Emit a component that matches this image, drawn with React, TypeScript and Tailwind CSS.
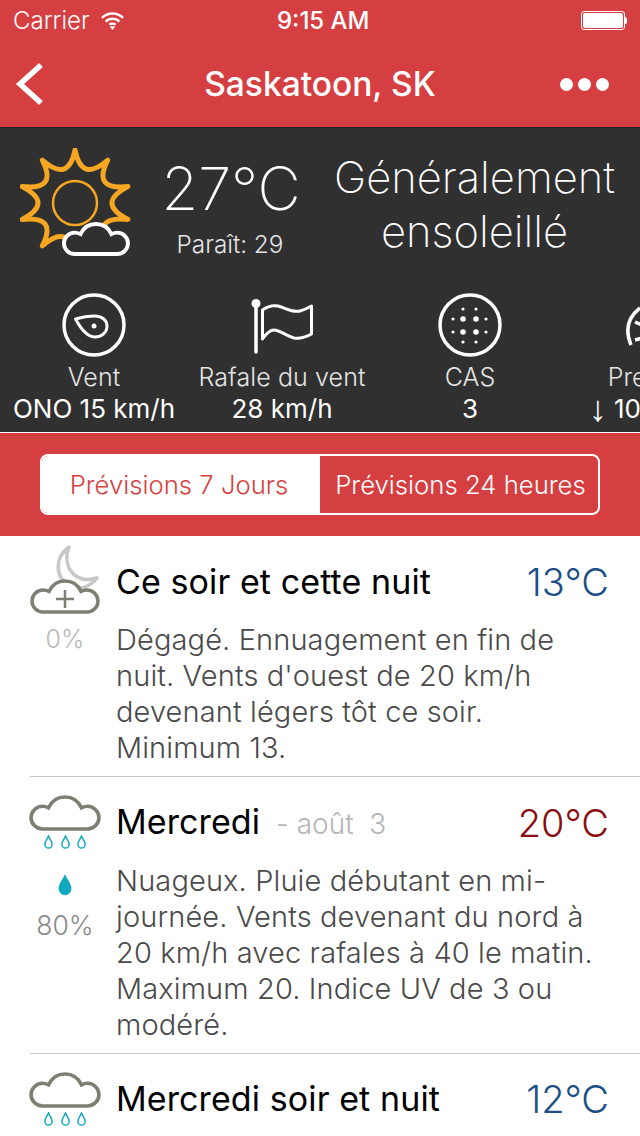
const font = { fontFamily: "Inter, 'Noto Sans', sans-serif" };

function sunPath() {
  const cx = 55;
  const cy = 55;
  const at = (deg: number, r: number, stretch: number) => {
    const a = (deg * Math.PI) / 180;
    return `${(cx + r * stretch * Math.cos(a)).toFixed(1)} ${(cy + r * Math.sin(a)).toFixed(1)}`;
  };
  let d = `M${at(-90, 53, 1.05)}`;
  for (let i = 0; i < 10; i++) {
    d += `Q${at(i * 36 - 72, 21, 1)} ${at(i * 36 - 54, 53, 1.05)}`;
  }
  return d + "Z";
}

const CLOUD = "M13 33H57C63 33 68 28 68 22C68 16 63 11 57 11C55 11 53 11.5 51 12.5C48 6 42 2 35 2C28 2 22 6 19 12.5C17 11.5 15 11 13 11C7 11 2 16 2 22C2 28 7 33 13 33Z";

function SunCloud() {
  return (
    <svg width="112" height="112" viewBox="0 0 112 112" fill="none" aria-hidden>
      <path d={sunPath()} stroke="#f5a623" strokeWidth="5" strokeLinejoin="round" />
      <circle cx="55" cy="55" r="22" stroke="#f5a623" strokeWidth="2.5" />
      <rect x="45" y="98" width="24" height="14" fill="#303030" />
      <g transform="translate(42 74) scale(0.97)">
        <path d={CLOUD} fill="#303030" stroke="#fff" strokeWidth="4" />
      </g>
    </svg>
  );
}

function Compass() {
  return (
    <svg width="64" height="64" viewBox="0 0 64 64" fill="none" aria-hidden>
      <circle cx="32" cy="32" r="30" stroke="#fff" strokeWidth="3.5" />
      <path d="M13.5 26C20 24 27 23 32 23C40 23 45 27 45 33C45 40 39 44 33 44C26 44 20 38 13.5 26Z" stroke="#fff" strokeWidth="3" strokeLinejoin="round" />
      <circle cx="32" cy="33" r="2.5" fill="#fff" />
    </svg>
  );
}

function Flag() {
  return (
    <svg width="64" height="64" viewBox="0 0 64 64" fill="none" aria-hidden>
      <path d="M6 10V59" stroke="#fff" strokeWidth="3.5" strokeLinecap="round" />
      <circle cx="6" cy="10.5" r="4.5" fill="#fff" />
      <path d="M12.5 17C18 13 23 12 28 13C36 15 42 20 50 18C54 17 58 15 61.5 13V41C56 44 50 46 44 45C36 43 30 37 24 37C20 37 16 41 12.5 46Z" stroke="#fff" strokeWidth="3" strokeLinejoin="round" />
    </svg>
  );
}

function Dots() {
  const big = [[25, 26], [38, 26], [25, 39], [38, 39]];
  const small = [[25, 16], [38, 16], [15, 26], [48, 26], [15, 39], [48, 39], [25, 49], [38, 49]];
  return (
    <svg width="64" height="64" viewBox="0 0 64 64" fill="none" aria-hidden>
      <circle cx="32" cy="32" r="30" stroke="#fff" strokeWidth="3.5" />
      {big.map(([x, y]) => <circle key={`${x}-${y}`} cx={x} cy={y} r="2.8" fill="#fff" />)}
      {small.map(([x, y]) => <circle key={`${x}-${y}`} cx={x} cy={y} r="1.6" fill="#fff" />)}
    </svg>
  );
}

function Gauge() {
  return (
    <svg width="64" height="64" viewBox="0 0 64 64" fill="none" aria-hidden>
      <path d="M5 52C0 40 0 26 14 15" stroke="#fff" strokeWidth="3.5" />
      <path d="M9 29L16 32M9 47L16 45" stroke="#fff" strokeWidth="3.5" />
    </svg>
  );
}

function Drop({ size, filled }: { size: number; filled?: boolean }) {
  return (
    <svg width={size} height={size * 1.6} viewBox="0 0 10 16" fill={filled ? "#0fa9c0" : "none"} aria-hidden>
      <path d="M5 1.2C6.2 4.5 9 7 9 10.5A4 4 0 0 1 1 10.5C1 7 3.8 4.5 5 1.2Z" stroke="#0fa9c0" strokeWidth={filled ? 0 : 1.6} />
    </svg>
  );
}

function MoonCloud() {
  return (
    <svg width="72" height="72" viewBox="0 0 72 72" fill="none" aria-hidden>
      <path d="M40 2C26 12 25 32 41 41C50 45 60 43 68 33C56 37 45 33 40 23C37 16 37 9 40 2Z" stroke="#c7c7c7" strokeWidth="3.5" strokeLinejoin="round" />
      <g transform="translate(1 34)">
        <path d={CLOUD} fill="#fff" stroke="#7d7f72" strokeWidth="3.5" />
        <path d="M35 11V29M26 20H44" stroke="#7d7f72" strokeWidth="2.5" />
      </g>
    </svg>
  );
}

function RainCloud() {
  return (
    <div className="flex flex-col items-center gap-[4px]">
      <svg width="72" height="36" viewBox="0 0 70 35" fill="none" aria-hidden>
        <path d={CLOUD} stroke="#7d7f72" strokeWidth="3.5" />
      </svg>
      <div className="flex gap-[7.5px]">
        <Drop size={9} />
        <Drop size={9} />
        <Drop size={9} />
      </div>
    </div>
  );
}

function Metric({ icon, label, value }: { icon: React.ReactNode; label: string; value: React.ReactNode }) {
  return (
    <div className="flex w-[188px] shrink-0 flex-col items-center">
      <div className="h-[64px]">{icon}</div>
      <p className="mt-[5px] text-[25px] leading-[31px] font-light tracking-[0.1px] whitespace-nowrap text-[#e4e4e4]">{label}</p>
      <p className="flex h-[31px] items-center text-[26px] leading-[31px] font-normal whitespace-nowrap text-white">{value}</p>
    </div>
  );
}

function Row({
  icon,
  iconTop,
  textTop,
  title,
  date,
  temp,
  tempColor,
  text,
  pop,
  last,
}: {
  icon: React.ReactNode;
  iconTop: string;
  textTop: string;
  title: string;
  date?: string;
  temp: string;
  tempColor: string;
  text: string[];
  pop?: React.ReactNode;
  last?: boolean;
}) {
  return (
    <div className={last ? "ml-[30px] flex" : "ml-[30px] flex border-b border-[#c8c8c8]"}>
      <div className={`flex w-[70px] shrink-0 flex-col items-center ${iconTop}`}>{icon}{pop}</div>
      <div className={`ml-[16px] flex-1 pr-[31px] pb-[10px] ${textTop}`}>
        <div className="flex items-center justify-between">
          <div className="flex items-baseline">
            <span className="text-[34px] leading-[44px] tracking-[0.1px] text-black">{title}</span>
            {date ? <span className="ml-[16px] text-[28px] font-light whitespace-pre text-[#b5b5b5]">{date}</span> : null}
          </div>
          <span className="text-[38px] leading-[44px] font-light" style={{ color: tempColor }}>{temp}</span>
        </div>
        <div className="mt-[18px] text-[29px] leading-[36px] font-light tracking-[0.12px] text-[#4a4a4a]">
          {text.map((t) => <p key={t} className="whitespace-nowrap">{t}</p>)}
        </div>
      </div>
    </div>
  );
}

export default function App() {
  return (
    <div className="h-[1136px] w-[640px] overflow-hidden bg-white" style={font}>
      <div className="h-[128px] border-b border-[#222] bg-[#d63f42] text-white">
        <div className="relative flex h-[41px] items-center justify-between pr-[13px] pl-[13px]">
          <div className="flex items-center gap-[10px]">
            <span className="text-[24px] font-light">Carrier</span>
            <svg width="25" height="19" viewBox="0 0 22 18" fill="none" aria-hidden>
              <path d="M1 6.5C6.5 1 15.5 1 21 6.5M4.5 10C8 6.5 14 6.5 17.5 10M8 13C9.6 11.7 12.4 11.7 14 13" stroke="#fff" strokeWidth="2.2" />
              <path d="M11 18L8.5 15C10 14 12 14 13.5 15Z" fill="#fff" />
            </svg>
          </div>
          <span className="absolute left-[277px] text-[24px] font-medium">9:15 AM</span>
          <div className="flex items-center">
            <div className="h-[19px] w-[44px] rounded-[3px] border border-white p-[1px]">
              <div className="h-full w-full rounded-[2px] bg-white" />
            </div>
            <div className="h-[7px] w-[2px] rounded-r bg-white" />
          </div>
        </div>
        <div className="relative flex h-[86px] items-center justify-center">
          <svg className="absolute left-[15px]" width="30" height="44" viewBox="0 0 30 44" fill="none" aria-hidden>
            <path d="M26 3L5 22L26 41" stroke="#fff" strokeWidth="5.5" />
          </svg>
          <span className="text-[33.5px] font-medium">Saskatoon, SK</span>
          <div className="absolute left-[560px] flex gap-[5px]">
            <div className="h-[13px] w-[13px] rounded-full bg-white" />
            <div className="h-[13px] w-[13px] rounded-full bg-white" />
            <div className="h-[13px] w-[13px] rounded-full bg-white" />
          </div>
        </div>
      </div>

      <div className="h-[305px] overflow-hidden border-b border-white bg-[#303030] text-white">
        <div className="flex h-[160px] pt-[20px]">
          <div className="ml-[20px] w-[112px] shrink-0"><SunCloud /></div>
          <div className="ml-[32px] flex w-[134px] shrink-0 flex-col items-center pt-[2px]">
            <span className="text-[59.5px] leading-[76px] font-[150] whitespace-nowrap">27°C</span>
            <span className="mt-[3px] mr-[2px] text-[24.3px] leading-[30px] font-light whitespace-nowrap text-[#e4e4e4]">Paraît: 29</span>
          </div>
          <div className="ml-[35px] flex w-[283px] shrink-0 flex-col items-center pt-[2px] text-[43.5px] leading-[54px] font-[250]">
            <span className="whitespace-nowrap">Généralement</span>
            <span className="whitespace-nowrap">ensoleillé</span>
          </div>
        </div>
        <div className="flex pt-[5px]">
          <Metric icon={<Compass />} label="Vent" value="ONO 15 km/h" />
          <Metric icon={<Flag />} label="Rafale du vent" value="28 km/h" />
          <Metric icon={<Dots />} label="CAS" value="3" />
          <Metric
            icon={<Gauge />}
            label="Pression"
            value={
              <>
                <span className="mr-[7px] font-['Liberation_Sans'] text-[36px] leading-[31px]">↓</span>
                101.3 kPa
              </>
            }
          />
        </div>
      </div>

      <div className="flex h-[103px] items-center justify-center bg-[#d63f42]">
        <div className="flex h-[61px] w-[560px] overflow-hidden rounded-[8px] border-2 border-white text-[25.7px]">
          <div className="flex w-[278px] items-center justify-center bg-white pt-[2px] pr-[4px] font-light text-[#d63f42]">Prévisions 7 Jours</div>
          <div className="flex flex-1 items-center justify-center pt-[2px] pl-[3px] font-light whitespace-nowrap text-white">Prévisions 24 heures</div>
        </div>
      </div>

      <div>
        <Row
          icon={<MoonCloud />}
          iconTop="pt-[9px]"
          textTop="pt-[24px]"
          title="Ce soir et cette nuit"
          temp="13°C"
          tempColor="#1c4f86"
          text={["Dégagé. Ennuagement en fin de", "nuit. Vents d'ouest de 20 km/h", "devenant légers tôt ce soir.", "Minimum 13."]}
          pop={<span className="mt-[2px] text-[25px] leading-[40px] font-light text-[#b8b8b8]">0%</span>}
        />
        <Row
          icon={<RainCloud />}
          iconTop="pt-[18px]"
          textTop="pt-[23px]"
          title="Mercredi"
          date="- août  3"
          temp="20°C"
          tempColor="#8b0d14"
          text={["Nuageux. Pluie débutant en mi-", "journée. Vents devenant du nord à", "20 km/h avec rafales à 40 le matin.", "Maximum 20. Indice UV de 3 ou", "modéré."]}
          pop={
            <div className="mt-[23px] flex flex-col items-center">
              <Drop size={16} filled />
              <span className="mt-[7px] text-[26.5px] leading-[40px] font-light text-[#8a8a8a]">80%</span>
            </div>
          }
        />
        <Row
          icon={<RainCloud />}
          iconTop="pt-[18px]"
          textTop="pt-[23px]"
          title="Mercredi soir et nuit"
          temp="12°C"
          tempColor="#1c4f86"
          text={[]}
          last
        />
      </div>
    </div>
  );
}
